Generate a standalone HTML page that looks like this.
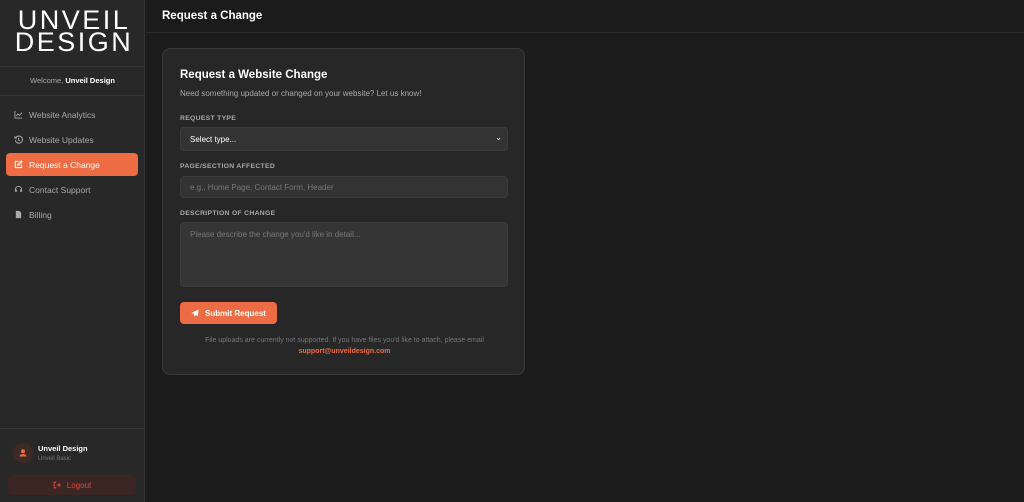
<!DOCTYPE html>
<html><head><meta charset="utf-8"><style>
*{box-sizing:border-box;margin:0;padding:0}
body{width:1024px;height:502px;background:#1b1b1b;font-family:"Liberation Sans",sans-serif;position:relative;overflow:hidden;color:#fff}
.sb{position:absolute;left:0;top:0;width:145px;height:502px;background:#282828;border-right:1px solid #333}
.logo{position:absolute;left:0;width:145px;text-align:center;color:#fff;font-size:27px;letter-spacing:2.5px;line-height:22px;font-weight:400;top:9px;padding-left:3px}
.hr{position:absolute;left:0;width:145px;height:1px;background:#343434}
.wel{position:absolute;top:76px;width:145px;text-align:center;font-size:7.5px;color:#aaa}
.wel b{color:#fff}
.nav{position:absolute;left:6px;width:132px;height:23px;border-radius:4px;font-size:8.5px;color:#a8a8a8;display:flex;align-items:center;padding-left:8px}
.nav svg{width:9px;height:9px;margin-right:6px}
.nav.a{background:#ee6c43;color:#fff}
.main-h{position:absolute;left:146px;top:0;right:0;height:33px;border-bottom:1px solid #2a2a2a;font-size:11.5px;font-weight:bold;padding:10px 0 0 16px}
.card{position:absolute;left:162px;top:48px;width:363px;height:327px;background:#272727;border:1px solid #383838;border-radius:8px}
.t{position:absolute;left:17px;top:20px;font-size:11.5px;font-weight:bold}
.s{position:absolute;left:17px;top:40px;font-size:8px;color:#aaa}
.l{position:absolute;left:17px;font-size:6.8px;font-weight:bold;color:#aaa;letter-spacing:.3px}
.f{position:absolute;left:17px;width:328px;background:#333;border:1px solid #3b3b3b;border-radius:4px;font-size:8px;color:#777;padding-left:9px}
.btn{position:absolute;left:17px;top:253px;width:97px;height:22px;background:#ee6c43;border-radius:4px;font-size:8px;font-weight:bold;display:flex;align-items:center;justify-content:center}
.ft{position:absolute;left:0;width:363px;text-align:center;font-size:7px;color:#777}
</style></head><body>
<div class="sb">
<div class="logo">UNVEIL<br>DESIGN</div>
<div class="hr" style="top:66px"></div>
<div class="wel">Welcome, <b>Unveil Design</b></div>
<div class="hr" style="top:95px"></div>
<div class="nav" style="top:103px"><svg viewBox="0 0 10 10" fill="none" stroke="#aaa" stroke-width="1"><path d="M1 1v8h8M2.5 6.5l2-2 1.5 1.5 3-3"/></svg>Website Analytics</div>
<div class="nav" style="top:128px"><svg viewBox="0 0 10 10" fill="none" stroke="#aaa" stroke-width="1.1"><path d="M2 3a4 4 0 1 1-.5 3M1 1.5v2h2M5 3v2.5l1.5 1"/></svg>Website Updates</div>
<div class="nav a" style="top:153px"><svg viewBox="0 0 10 10" fill="none" stroke="#fff" stroke-width="1.1"><path d="M5 1.5H1.5v7h7V5M4 6l.3-1.5L8 1l1 1-3.5 3.7z"/></svg>Request a Change</div>
<div class="nav" style="top:178px"><svg viewBox="0 0 10 10" fill="#aaa"><path d="M5 1a4 4 0 0 0-4 4v2.5h2.2V5H2a3 3 0 0 1 6 0H6.8v2.5H9V5a4 4 0 0 0-4-4z"/></svg>Contact Support</div>
<div class="nav" style="top:203px"><svg viewBox="0 0 10 10" fill="#aaa"><path d="M2 1h4l2 2v6H2z"/></svg>Billing</div>
<div class="hr" style="top:428px"></div>
<div style="position:absolute;left:13px;top:443px;width:20px;height:20px;border-radius:50%;background:#3e2a24"><svg viewBox="0 0 20 20" width="20" height="20"><circle cx="10" cy="8.3" r="2" fill="#ee6c43"/><path d="M6.5 13.5a3.5 2.5 0 0 1 7 0z" fill="#ee6c43"/></svg></div>
<div style="position:absolute;left:38px;top:444px;font-size:7.5px;font-weight:bold">Unveil Design</div>
<div style="position:absolute;left:38px;top:456px;font-size:6px;color:#777">Unveil Basic</div>
<div style="position:absolute;left:8px;top:475px;width:128px;height:20px;background:#3b2624;border-radius:4px;color:#e0463a;font-size:8px;display:flex;align-items:center;justify-content:center"><svg viewBox="0 0 10 10" width="8" height="8" style="margin-right:6px" fill="none" stroke="#e0463a" stroke-width="1.3"><path d="M4 1.5H1.5v7H4M4.5 5H9M7 3l2 2-2 2"/></svg>Logout</div>
</div>
<div class="main-h">Request a Change</div>
<div class="card">
<div class="t">Request a Website Change</div>
<div class="s">Need something updated or changed on your website? Let us know!</div>
<div class="l" style="top:66px">REQUEST TYPE</div>
<div class="f" style="top:78px;height:24px;color:#fff;padding-top:7px">Select type...<span style="position:absolute;right:5px;top:5px;font-size:8px">&#8964;</span></div>
<div class="l" style="top:114px">PAGE/SECTION AFFECTED</div>
<div class="f" style="top:127px;height:22px;padding-top:6px">e.g., Home Page, Contact Form, Header</div>
<div class="l" style="top:161px">DESCRIPTION OF CHANGE</div>
<div class="f" style="top:173px;height:65px;padding-top:7px;background:#353535">Please describe the change you'd like in detail...</div>
<div class="btn"><svg viewBox="0 0 10 10" width="8" height="8" style="margin-right:6px"><path d="M9.5.5L.5 5l3 1 1 3.5 1.5-2 2.5 1.5z" fill="#fff"/></svg>Submit Request</div>
<div class="ft" style="top:288px">File uploads are currently not supported. If you have files you'd like to attach, please email</div>
<div class="ft" style="top:299px;color:#ee6c43;font-weight:bold">support@unveildesign.com</div>
</div>
</body></html>
